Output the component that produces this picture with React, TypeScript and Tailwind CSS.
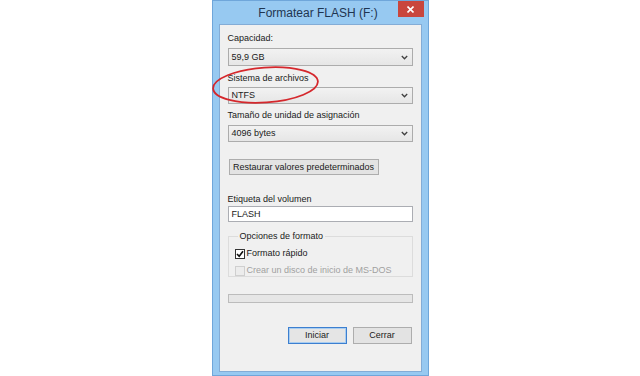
import React from "react";

const font = { fontFamily: '"Liberation Sans", Arial, sans-serif' };

function Chevron() {
  return (
    <svg width="7" height="5" viewBox="0 0 7 5" className="shrink-0">
      <polyline points="0.8,1 3.5,3.8 6.2,1" fill="none" stroke="#404040" strokeWidth="1.3" />
    </svg>
  );
}

function Select({ value, className = "" }: { value: string; className?: string }) {
  return (
    <div
      className={`flex h-[17px] items-center justify-between border border-[#acacac] bg-gradient-to-b from-[#f2f2f2] to-[#e6e6e6] pl-[3px] pr-[4px] text-[#1a1a1a] ${className}`}
    >
      <span>{value}</span>
      <Chevron />
    </div>
  );
}

export default function App() {
  return (
    <div className="relative h-[376px] w-[640px] overflow-hidden bg-white" style={font}>
      {/* ventana */}
      <div className="mx-auto flex h-[376px] w-[217px] flex-col border border-[#6fa6da] bg-[#97c9f1]">
        {/* barra de título */}
        <div className="flex h-[23px] shrink-0 items-start">
          <div className="flex-1 pt-[5px] pl-[26px] text-center text-[12px] leading-[14px] text-[#1f3550]">
            Formatear FLASH (F:)
          </div>
          <div className="mr-[4px] flex h-[16px] w-[26px] items-center justify-center bg-[#c9463d]">
            <svg width="7" height="7" viewBox="0 0 7 7">
              <path d="M0.5 0.5L6.5 6.5M6.5 0.5L0.5 6.5" stroke="white" strokeWidth="1.6" />
            </svg>
          </div>
        </div>

        {/* contenido */}
        <div className="mx-[6px] mb-[3px] flex flex-1 flex-col border border-[#83acd6] bg-[#f0f0f0] px-[8px] text-[9px] leading-[13px] text-[#1a1a1a]">
          <div className="mt-[7px]">Capacidad:</div>
          <Select value="59,9 GB" className="mt-[3px] h-[18px]" />

          <div className="mt-[6px]">Sistema de archivos</div>
          <Select value="NTFS" className="mt-[2px]" />

          <div className="mt-[5px]">Tamaño de unidad de asignación</div>
          <Select value="4096 bytes" className="mt-[3px]" />

          <button className="mt-[17px] h-[16px] w-[150px] self-start border border-[#adadad] bg-[#e3e3e3] ml-[1px] text-[9px] leading-[13px] text-[#1a1a1a]">
            Restaurar valores predeterminados
          </button>

          <div className="mt-[18px]">Etiqueta del volumen</div>
          <div className="flex h-[16px] items-center border border-[#abadb3] bg-white pl-[3px]">FLASH</div>

          <fieldset className="mt-[8px] h-[47px] border border-[#dcdcdc] px-[6px]">
            <legend className="ml-[3px] px-[2px] leading-[12px] text-[#1a1a1a]">Opciones de formato</legend>
            <div className="mt-[5px] flex items-center gap-[2px]">
              <div className="flex h-[10px] w-[10px] items-center justify-center border border-[#333] bg-white">
                <svg width="8" height="8" viewBox="0 0 8 8">
                  <polyline points="1,4 3.2,6.3 7,1.2" fill="none" stroke="#111" strokeWidth="1.6" />
                </svg>
              </div>
              <span>Formato rápido</span>
            </div>
            <div className="mt-[4px] flex items-center gap-[2px] text-[#a0a0a0]">
              <div className="h-[10px] w-[10px] border border-[#cfcfcf] bg-[#ececec]" />
              <span>Crear un disco de inicio de MS-DOS</span>
            </div>
          </fieldset>

          <div className="mt-[17px] h-[9px] border border-[#bcbcbc] bg-[#e6e6e6]" />

          <div className="mt-[24px] flex justify-end gap-[6px] pr-[1px]">
            <button className="h-[17px] w-[59px] border border-[#3c7fd0] bg-[#e5e5e5] text-[9px] leading-[13px] text-[#1a1a1a] shadow-[inset_0_0_0_1px_#a9cdf0]">
              Iniciar
            </button>
            <button className="h-[17px] w-[59px] border border-[#adadad] bg-[#e3e3e3] text-[9px] leading-[13px] text-[#1a1a1a]">
              Cerrar
            </button>
          </div>
        </div>
      </div>

      {/* círculo rojo */}
      <svg className="pointer-events-none absolute left-0 top-0" width="640" height="376">
        <ellipse cx="265.5" cy="85" rx="52.5" ry="17.5" fill="none" stroke="#d5282d" strokeWidth="1.8" transform="rotate(-4 265.5 85)" />
      </svg>
    </div>
  );
}
